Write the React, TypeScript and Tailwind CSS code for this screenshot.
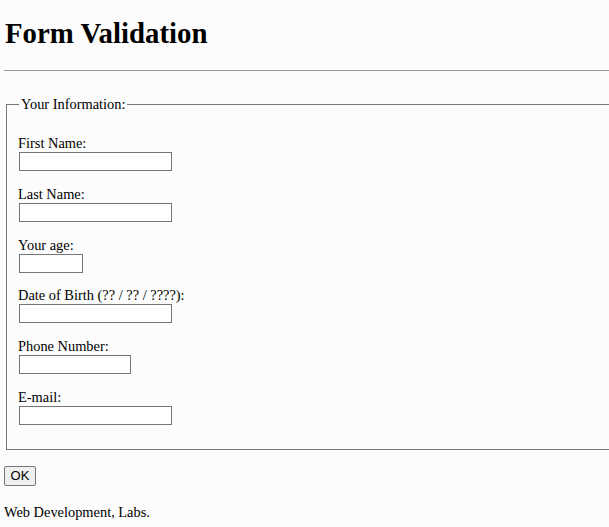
const fields = [
  { label: "First Name:", width: "w-[153px]" },
  { label: "Last Name:", width: "w-[153px]" },
  { label: "Your age:", width: "w-[64px]" },
  { label: "Date of Birth (?? / ?? / ????):", width: "w-[153px]" },
  { label: "Phone Number:", width: "w-[112px]" },
  { label: "E-mail:", width: "w-[153px]" },
];

export default function App() {
  return (
    <div className="h-[527px] overflow-hidden bg-[#fcfcfc] px-[4px] text-[14.4px] leading-[16px] text-black font-['Liberation_Serif',serif]">
      <h1 className="mt-[17px] pl-[1px] text-[28.8px] font-bold leading-[32px]">Form Validation</h1>
      <hr className="mt-[21px] w-[700px] border-[#9a9a9a]" />

      <fieldset className="mt-[25px] ml-[2px] w-[700px] border border-[#767676] px-[12px] pt-[23px] pb-[24px]">
        <legend className="px-[2px] leading-[16px]">Your Information:</legend>
        <div className="flex flex-col gap-[14.8px]">
          {fields.map((f) => (
            <div key={f.label} className="flex flex-col">
              <label className="-ml-px leading-[16px]">{f.label}</label>
              <input
                type="text"
                className={`mt-[1px] h-[19px] ${f.width} border border-[#767676] bg-white`}
              />
            </div>
          ))}
        </div>
      </fieldset>

      <button className="mt-[16px] block h-[20px] w-[32px] rounded-[2px] border border-[#767676] bg-[#efefef] text-[13px] leading-none font-['Liberation_Sans',sans-serif]">
        OK
      </button>

      <p className="mt-[18px] leading-[16px]">Web Development, Labs.</p>
    </div>
  );
}
